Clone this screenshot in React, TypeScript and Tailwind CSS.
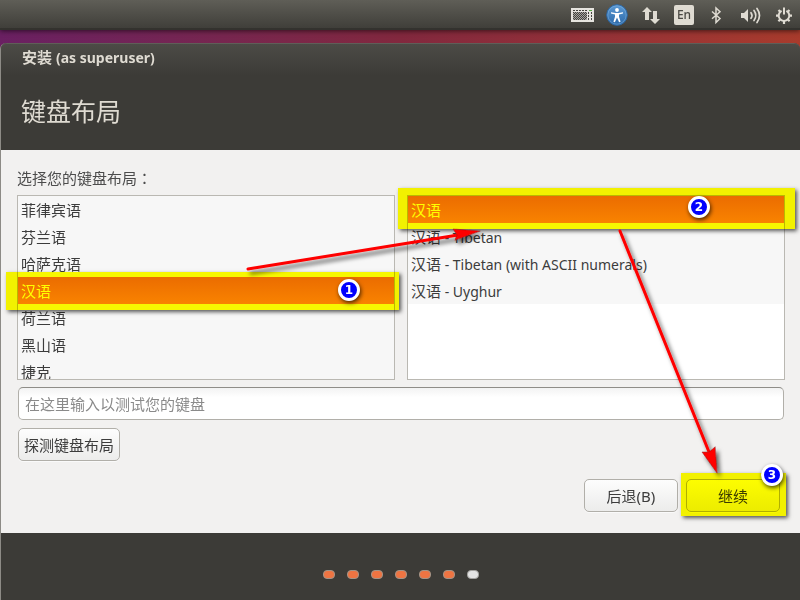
import { useState } from 'react';
import type { ReactNode } from 'react';

type Option = { name: string; detail?: string };

const LANGUAGES: Option[] = [
  { name: '菲律宾语' },
  { name: '芬兰语' },
  { name: '哈萨克语' },
  { name: '汉语' },
  { name: '荷兰语' },
  { name: '黑山语' },
  { name: '捷克' },
];
const VARIANTS: Option[] = [
  { name: '汉语' },
  { name: '汉语', detail: ' - Tibetan' },
  { name: '汉语', detail: ' - Tibetan (with ASCII numerals)' },
  { name: '汉语', detail: ' - Uyghur' },
];
const STEPS = [true, true, true, true, true, true, false];

function KeyboardIcon() {
  return (
    <svg className="h-5 w-6" viewBox="0 0 24 20" shapeRendering="crispEdges">
      <rect x="1" y="3" width="24" height="14" fill="#e6e4df" />
      <rect x="3" y="7" width="14" height="8" fill="#a5a4a0" />
      <g stroke="#45443f" strokeWidth="1">
        <path d="M3 5.5h14" strokeDasharray="2 1" />
        <path d="M3 7.5h14M3 9.5h14M3 11.5h14M3 13.5h14" strokeDasharray="1 1" />
        <path d="M4 8.5h13M4 10.5h13M4 12.5h13M4 14.5h12" strokeDasharray="1 1" />
        <path d="M18.5 7v8M21.5 7v8" strokeDasharray="2 1" />
      </g>
      <path d="M19 5.5h3" stroke="#57a845" />
    </svg>
  );
}

function AccessibilityIcon() {
  return (
    <svg className="h-6 w-[22px]" viewBox="0 0 22 24">
      <defs>
        <linearGradient id="access" x1="0" y1="0" x2="0" y2="1">
          <stop offset="0" stopColor="#5c9ad4" />
          <stop offset="1" stopColor="#2b68a8" />
        </linearGradient>
      </defs>
      <circle cx="11" cy="12" r="10.3" fill="url(#access)" stroke="#2c69a8" />
      <circle cx="11" cy="12" r="9.2" fill="none" stroke="#86b5e0" strokeOpacity=".5" />
      <circle cx="11" cy="7" r="1.9" fill="#fff" />
      <path d="M5 9.2l4.4.7h3.2l4.4-.7v1.4l-4 1v2.2l1.6 5-1.5.5-2.1-4.9-2.1 4.9-1.5-.5 1.6-5v-2.2l-4-1z" fill="#fff" />
    </svg>
  );
}

function NetworkIcon() {
  return (
    <svg className="h-5 w-[22px]" viewBox="0 0 22 20" fill="#dfdbd2">
      <path d="M7 2l5 5H9v8H5V7H2z" />
      <path d="M15 19l-5-5h3V6h4v8h3z" />
    </svg>
  );
}

function BluetoothIcon() {
  return (
    <svg className="size-5" viewBox="0 0 20 20" fill="none" stroke="#dfdbd2" strokeWidth="1.5">
      <path d="M6 6.5l8 7-4 4V3l4 3.8-8 7" />
    </svg>
  );
}

function VolumeIcon() {
  return (
    <svg className="h-5 w-6" viewBox="0 0 24 20" fill="none" stroke="#dfdbd2" strokeWidth="1.7" strokeLinecap="round">
      <path d="M3 8h3l4-4v13l-4-4H3z" fill="#dfdbd2" stroke="none" />
      <path d="M13 7.7q2 2.8 0 5.6" />
      <path d="M16 5.5q3.6 5 0 10" />
      <path d="M19 3.5q5 7 0 14" />
    </svg>
  );
}

function SessionIcon() {
  return (
    <svg className="size-5" viewBox="0 0 20 20" fill="none" stroke="#dfdbd2">
      <path d="M7.6 5.9a5.3 5.3 0 1 0 4.8 0" strokeWidth="2" />
      <path d="M10 2.5v7" strokeWidth="2" />
      <path
        d="M4.5 5l2 2M15.5 5l-2 2M2 10.7h3M18 10.7h-3M4.4 16.3l2-2M15.6 16.3l-2-2M10 19v-3"
        strokeWidth="2.2"
      />
    </svg>
  );
}

function TopBar() {
  const item = 'flex items-center';
  return (
    <header className="flex h-[30px] items-center justify-end gap-3 border-b-2 border-[#33322e] bg-linear-to-b from-[#5f5e57] to-[#403f3a] pt-px pr-[6px] shadow-[0_1px_5px_rgba(0,0,0,0.6)]">
      <button aria-label="键盘" className={item}><KeyboardIcon /></button>
      <button aria-label="辅助功能" className={item}><AccessibilityIcon /></button>
      <button aria-label="网络" className={item}><NetworkIcon /></button>
      <button className="size-5 rounded-xs bg-[#dfdbd2] text-[12px] leading-5 font-medium text-[#4a4944]">En</button>
      <button aria-label="蓝牙" className={item}><BluetoothIcon /></button>
      <button aria-label="音量" className={item}><VolumeIcon /></button>
      <button aria-label="会话" className={item}><SessionIcon /></button>
    </header>
  );
}

function Highlight({ className }: { className: string }) {
  return (
    <div
      className={`pointer-events-none absolute bg-[#ffff00] shadow-[2px_2px_4px_rgba(0,0,0,0.65)] mix-blend-multiply ${className}`}
    />
  );
}

function Badge({ className, children }: { className: string; children: ReactNode }) {
  return (
    <span
      className={`pointer-events-none absolute flex size-[22px] items-center justify-center rounded-full border-3 border-white bg-[#0000fe] font-['DejaVu_Sans',sans-serif] text-[12px] leading-4 font-bold text-white shadow-[1px_2px_4px_rgba(0,0,0,0.7)] ${className}`}
    >
      {children}
    </span>
  );
}

function ListBox({ name, label, options, initial }: { name: string; label: string; options: Option[]; initial: number }) {
  const [selected, setSelected] = useState(initial);
  return (
    <div role="radiogroup" aria-label={label} className="h-[185px] overflow-hidden border border-[#bab8b2] bg-white">
      {options.map((option, i) => (
        <label
          key={i}
          className={`flex h-[27px] items-center px-[3px] pt-[2px] whitespace-pre ${
            i === selected ? 'bg-linear-to-b from-[#eb6c00] to-[#f98300] text-white' : 'bg-[#f7f7f7]'
          }`}
        >
          <input
            type="radio"
            name={name}
            checked={i === selected}
            onChange={() => setSelected(i)}
            className="size-0 appearance-none"
          />
          {option.name}
          {option.detail && <span className="text-[14px]">{option.detail}</span>}
        </label>
      ))}
    </div>
  );
}

const BUTTON =
  'h-[33px] rounded-[5px] border border-[#b1afa9] bg-linear-to-b from-[#fdfdfd] to-[#ececeb] pt-[2px] shadow-[0_1px_0_#fafafa]';

function Arrows() {
  return (
    <svg className="pointer-events-none absolute top-0 left-0 h-[600px] w-[800px] max-w-full" viewBox="0 0 800 600">
      <defs>
        <filter id="drop" x="-20%" y="-40%" width="150%" height="220%">
          <feDropShadow dx="3" dy="4" stdDeviation="2" floodColor="#000" floodOpacity=".6" />
        </filter>
      </defs>
      <g fill="#fe0000" stroke="#fe0000" strokeLinecap="round" filter="url(#drop)">
        <path d="M248 269L458 235M620 231L709 452" strokeWidth="3" />
        <path d="M480 231L453 229L457 235L455 240Z" stroke="#8e2020" strokeWidth=".5" />
        <path d="M717 473L702 452L709 452L715 447Z" stroke="#8e2020" strokeWidth=".5" />
      </g>
    </svg>
  );
}

export default function App() {
  return (
    <div className="relative flex min-h-screen flex-col overflow-hidden bg-linear-to-r from-[#6a2062] via-[#82283e] to-[#a83b2c] font-['Noto_Sans','Noto_Sans_CJK_SC',sans-serif] text-[15px] text-[#3c3c3c]">
      <TopBar />
      <main className="mt-[13px] flex grow flex-col rounded-t-md border-l border-[#8d8b86] bg-[#3c3b37]">
        <div className="h-[107px] rounded-t-md border-t border-[#5f5e58] bg-linear-to-b from-[#4c4b46] to-[#3c3b37] to-30% px-5 text-[#dfdbd2]">
          <h1 className="pt-[3px] pl-px text-[15px] leading-5 font-bold">
            安装 <span className="text-[14px]">(as superuser)</span>
          </h1>
          <h2 className="mt-[25px] text-[25px] leading-9">键盘布局</h2>
        </div>

        <section className="bg-[#f2f1f0] pt-[17px] pr-[15px] pb-[21px] pl-4">
          <p className="h-7 leading-[22px] text-[#4c4c4c]">
            选择您的键盘布局<span className="font-['Noto_Sans_CJK_TC',sans-serif]">：</span>
          </p>
          <div className="grid grid-cols-2 gap-3">
            <div className="relative">
              <ListBox name="language" label="语言" options={LANGUAGES} initial={3} />
              <Highlight className="top-[77px] -right-1 -left-[11px] h-[38px]" />
              <Badge className="top-[84px] right-[35px]">1</Badge>
            </div>
            <div className="relative">
              <ListBox name="variant" label="布局" options={VARIANTS} initial={0} />
              <Highlight className="-top-[7px] -right-[10px] -left-[9px] h-[41px]" />
              <Badge className="top-px right-[75px]">2</Badge>
            </div>
          </div>
          <input
            aria-label="测试您的键盘"
            placeholder="在这里输入以测试您的键盘"
            className="mt-[7px] ml-px block h-[33px] w-[calc(100%-2px)] rounded-[5px] border border-[#b1afa9] border-t-[#8f8d88] bg-linear-to-b from-[#f3f3f3] to-white to-30% px-[6px] placeholder:text-[#8a8a8a]"
          />
          <button className={`${BUTTON} mt-2 ml-px px-[5px]`}>探测键盘布局</button>
          <div className="mt-[18px] flex justify-end gap-2 pr-[5px]">
            <button className={`${BUTTON} w-[94px]`}>后退(B)</button>
            <div className="relative">
              <button className={`${BUTTON} w-[94px]`}>继续</button>
              <Highlight className="-top-[6px] -right-[6px] -bottom-1 -left-[5px]" />
              <Badge className="-top-[15px] -right-[3px]">3</Badge>
            </div>
          </div>
        </section>

        <footer className="flex justify-center gap-3 pt-[37px] pb-5">
          {STEPS.map((done, i) => (
            <span
              key={i}
              className={`h-[9px] w-3 rounded-[4px] border ${
                done ? 'border-[#a09488] bg-[#ee7442]' : 'border-[#a3a29f] bg-[#e4e4e4]'
              }`}
            />
          ))}
        </footer>
      </main>
      <Arrows />
    </div>
  );
}
